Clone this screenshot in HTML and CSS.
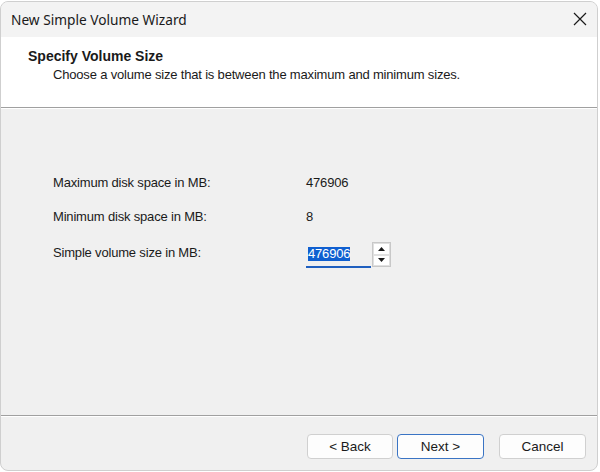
FILE: index.html
```html
<!DOCTYPE html>
<html>
<head>
<meta charset="utf-8">
<link rel="stylesheet" href="styles.css">
</head>
<body>
<div class="window">
  <div class="titlebar">
    <span class="title">New Simple Volume Wizard</span>
    <span class="close">
      <svg width="14" height="14" viewBox="0 0 14 14"><path d="M1 1 L13 13 M13 1 L1 13" stroke="#1a1a1a" stroke-width="1.2" fill="none"/></svg>
    </span>
  </div>
  <div class="header">
    <div class="h-title">Specify Volume Size</div>
    <div class="h-sub">Choose a volume size that is between the maximum and minimum sizes.</div>
  </div>
  <div class="sep"></div>
  <div class="content">
    <div class="row r1">
      <span class="label">Maximum disk space in MB:</span>
      <span class="value">476906</span>
    </div>
    <div class="row r2">
      <span class="label">Minimum disk space in MB:</span>
      <span class="value">8</span>
    </div>
    <div class="row r3">
      <span class="label">Simple volume size in MB:</span>
      <div class="spin">
        <div class="input"><span class="sel">476906</span></div>
        <div class="arrows">
          <div class="arrow"><svg width="7" height="4" viewBox="0 0 7 4"><path d="M0 4 L3.5 0 L7 4 Z" fill="#1a1a1a"/></svg></div>
          <div class="arrow"><svg width="7" height="4" viewBox="0 0 7 4"><path d="M0 0 L3.5 4 L7 0 Z" fill="#1a1a1a"/></svg></div>
        </div>
      </div>
    </div>
  </div>
  <div class="sep"></div>
  <div class="footer">
    <button class="btn back">&lt; Back</button>
    <button class="btn next">Next &gt;</button>
    <button class="btn cancel">Cancel</button>
  </div>
</div>
</body>
</html>
```
FILE: styles.css
```css
html, body {
  margin: 0;
  padding: 0;
  background: #ffffff;
}
body {
  padding-top: 1px;
  font-family: "Liberation Sans", Arial, sans-serif;
  font-size: 13px;
  letter-spacing: -0.18px;
  color: #1a1a1a;
}
.window {
  width: 596px;
  height: 468px;
  border: 1px solid #cfcfcf;
  border-radius: 8px;
  overflow: hidden;
  background: #f0f0f0;
  display: flex;
  flex-direction: column;
}
.titlebar {
  height: 35px;
  flex: none;
  background: #f3f3f3;
  display: flex;
  align-items: center;
  justify-content: space-between;
  padding-left: 10px;
  padding-right: 10px;
}
.title {
  font-family: "Noto Sans", "Open Sans", sans-serif;
  font-size: 13.7px;
  letter-spacing: 0;
  color: #1a1a1a;
}
.close {
  display: flex;
  width: 14px;
  height: 14px;
  margin-top: -2px;
}
.header {
  height: 70px;
  flex: none;
  background: #ffffff;
  padding-left: 27px;
  box-sizing: border-box;
  padding-top: 11px;
}
.h-title {
  font-weight: bold;
  font-size: 14px;
  letter-spacing: 0;
  line-height: 17px;
}
.h-sub {
  padding-left: 25px;
  line-height: 16px;
  margin-top: 2px;
}
.sep {
  height: 1px;
  flex: none;
  background: #a0a0a0;
  border-bottom: 1px solid #ffffff;
}
.content {
  flex: 1;
  padding-left: 52px;
  padding-top: 65px;
  box-sizing: border-box;
}
.row {
  display: flex;
  align-items: center;
  height: 16px;
}
.r2 { margin-top: 18px; }
.r3 { margin-top: 20px; }
.label {
  width: 253px;
}
.spin {
  display: flex;
  align-items: flex-start;
  margin-top: 6px;
}
.input {
  width: 65px;
  height: 26px;
  box-sizing: border-box;
  border-bottom: 2px solid #1f5fbf;
  display: flex;
  align-items: center;
  padding-left: 2px;
}
.sel {
  background: #0f5fd0;
  color: #ffffff;
  line-height: 14px;
}
.arrows {
  display: flex;
  flex-direction: column;
  margin-left: 1px;
  border: 1px solid #c8c8c8;
  background: #ffffff;
  width: 19px;
  height: 25px;
  box-sizing: border-box;
}
.arrow {
  flex: 1;
  display: flex;
  align-items: center;
  justify-content: center;
  border: 1px solid #e0e0e0;
}
.footer {
  height: 53px;
  flex: none;
  display: flex;
  align-items: flex-start;
  justify-content: flex-end;
  padding-top: 17px;
  padding-right: 11px;
  box-sizing: border-box;
}
.btn {
  font-family: "Liberation Sans", Arial, sans-serif;
  font-size: 13.5px;
  letter-spacing: 0;
  color: #1a1a1a;
  width: 86px;
  height: 25px;
  background: #fdfdfd;
  border: 1px solid #d0d0d0;
  border-radius: 4px;
  padding: 0;
}
.next {
  margin-left: 4px;
  width: 87px;
  border-color: #3a74c4;
}
.cancel {
  margin-left: 15px;
  width: 87px;
}
```
